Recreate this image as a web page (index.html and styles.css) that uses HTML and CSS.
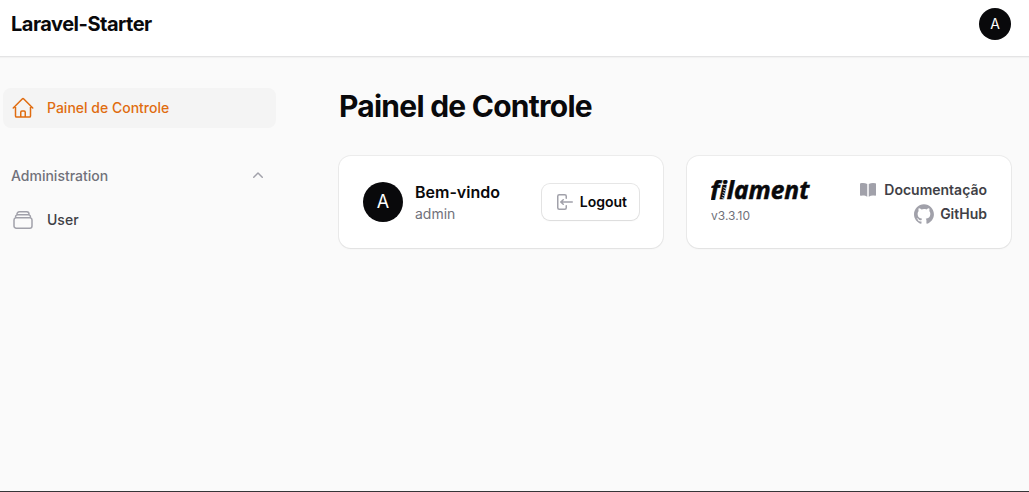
FILE: index.html
```html
<!DOCTYPE html>
<html lang="pt-BR">
<head>
<meta charset="utf-8">
<title>Painel de Controle - Laravel-Starter</title>
<link rel="stylesheet" href="styles.css">
</head>
<body>
<header class="topbar">
  <div class="brand">Laravel-Starter</div>
  <div class="avatar avatar-sm">A</div>
</header>
<div class="layout">
  <nav class="sidebar">
    <a class="nav-item active">
      <svg class="icon-lg" viewBox="0 0 24 24" fill="none" stroke="currentColor" stroke-width="1.5" stroke-linecap="round" stroke-linejoin="round"><path d="m2.25 12 8.954-8.955c.44-.439 1.152-.439 1.591 0L21.75 12M4.5 9.75v10.125c0 .621.504 1.125 1.125 1.125H9.75v-4.875c0-.621.504-1.125 1.125-1.125h2.25c.621 0 1.125.504 1.125 1.125V21h4.125c.621 0 1.125-.504 1.125-1.125V9.75M8.25 21h8.25"/></svg>
      <span>Painel de Controle</span>
    </a>
    <div class="group-head">
      <span>Administration</span>
      <svg class="icon-md" viewBox="0 0 20 20" fill="currentColor"><path d="M9.47 6.47a.75.75 0 0 1 1.06 0l4.25 4.25a.75.75 0 1 1-1.06 1.06L10 8.06l-3.72 3.72a.75.75 0 0 1-1.06-1.06l4.25-4.25Z"/></svg>
    </div>
    <a class="nav-item">
      <svg class="icon-lg" viewBox="0 0 24 24" fill="none" stroke="currentColor" stroke-width="1.5" stroke-linecap="round" stroke-linejoin="round"><path d="M6 6.878V6a2.25 2.25 0 0 1 2.25-2.25h7.5A2.25 2.25 0 0 1 18 6v.878m-12 0c.235-.083.487-.128.75-.128h10.5c.263 0 .515.045.75.128m-12 0A2.25 2.25 0 0 0 4.5 9v.878m13.5-3A2.25 2.25 0 0 1 19.5 9v.878m0 0a2.246 2.246 0 0 0-.75-.128H5.25c-.263 0-.515.045-.75.128m15 0A2.25 2.25 0 0 1 21 12v6a2.25 2.25 0 0 1-2.25 2.25H5.25A2.25 2.25 0 0 1 3 18v-6c0-.98.626-1.813 1.5-2.122"/></svg>
      <span>User</span>
    </a>
  </nav>
  <main class="main">
    <h1 class="title">Painel de Controle</h1>
    <div class="cards">
      <section class="card">
        <div class="avatar avatar-md">A</div>
        <div class="welcome">
          <h2 class="welcome-title">Bem-vindo</h2>
          <p class="welcome-name">admin</p>
        </div>
        <button class="logout">
          <svg class="icon-md" viewBox="0 0 20 20" fill="currentColor" fill-rule="evenodd"><path d="M3 4.25A2.25 2.25 0 0 1 5.25 2h5.5A2.25 2.25 0 0 1 13 4.25v2a.75.75 0 0 1-1.5 0v-2a.75.75 0 0 0-.75-.75h-5.5a.75.75 0 0 0-.75.75v11.5c0 .414.336.75.75.75h5.5a.75.75 0 0 0 .75-.75v-2a.75.75 0 0 1 1.5 0v2A2.25 2.25 0 0 1 10.75 18h-5.5A2.25 2.25 0 0 1 3 15.75V4.25Z"/><path d="M19 10a.75.75 0 0 0-.75-.75H8.704l1.048-.943a.75.75 0 1 0-1.004-1.114l-2.5 2.25a.75.75 0 0 0 0 1.114l2.5 2.25a.75.75 0 1 0 1.004-1.114l-1.048-.943h9.546A.75.75 0 0 0 19 10Z"/></svg>
          <span>Logout</span>
        </button>
      </section>
      <section class="card">
        <div class="product">
          <svg class="logo" viewBox="0 0 100 20">
            <text class="logo-text" x="-.8" y="19.3" textLength="99" lengthAdjust="spacingAndGlyphs">filament</text>
            <path class="logo-coil" d="M12.5 7.5l2.5 1M12.2 10l2.5 1M11.7 12.5l2.5 1M11.2 15l2.5 1M10.7 17.5l2.5 1"/>
          </svg>
          <p class="version">v3.3.10</p>
        </div>
        <div class="links">
          <a class="link">
            <svg class="icon-md" viewBox="0 0 20 20" fill="currentColor"><path d="M10.75 16.82A7.462 7.462 0 0 1 15 15.5c.71 0 1.396.098 2.046.282A.75.75 0 0 0 18 15.06v-11a.75.75 0 0 0-.546-.721A9.006 9.006 0 0 0 15 3a8.963 8.963 0 0 0-4.25 1.065V16.82ZM9.25 4.065A8.963 8.963 0 0 0 5 3c-.85 0-1.673.118-2.454.339A.75.75 0 0 0 2 4.06v11a.75.75 0 0 0 .954.721A7.506 7.506 0 0 1 5 15.5c1.579 0 3.042.487 4.25 1.32V4.065Z"/></svg>
            <span>Documentação</span>
          </a>
          <a class="link">
            <svg class="icon-md" viewBox="0 0 98 96" fill="currentColor"><path fill-rule="evenodd" clip-rule="evenodd" d="M48.854 0C21.839 0 0 22 0 49.217c0 21.756 13.993 40.172 33.405 46.69 2.427.49 3.316-1.059 3.316-2.362 0-1.141-.08-5.052-.08-9.127-13.59 2.934-16.42-5.867-16.42-5.867-2.184-5.704-5.42-7.17-5.42-7.17-4.448-3.015.324-3.015.324-3.015 4.934.326 7.523 5.052 7.523 5.052 4.367 7.496 11.404 5.378 14.235 4.074.404-3.178 1.699-5.378 3.074-6.6-10.839-1.141-22.243-5.378-22.243-24.283 0-5.378 1.94-9.778 5.014-13.2-.485-1.222-2.184-6.275.486-13.038 0 0 4.125-1.304 13.426 5.052a46.97 46.97 0 0 1 12.214-1.63c4.125 0 8.33.571 12.213 1.63 9.302-6.356 13.427-5.052 13.427-5.052 2.67 6.763.97 11.816.485 13.038 3.155 3.422 5.015 7.822 5.015 13.2 0 18.905-11.404 23.06-22.324 24.283 1.78 1.548 3.316 4.481 3.316 9.126 0 6.6-.08 11.897-.08 13.526 0 1.304.89 2.853 3.316 2.364 19.412-6.52 33.405-24.935 33.405-46.691C97.707 22 75.788 0 48.854 0z"/></svg>
            <span>GitHub</span>
          </a>
        </div>
      </section>
    </div>
  </main>
</div>
<footer class="bottom-edge"></footer>
</body>
</html>
```
FILE: styles.css
```css
* { box-sizing: border-box; }
body {
  margin: 0;
  height: 492px;
  display: flex;
  flex-direction: column;
  overflow: hidden;
  background: #fafafa;
  color: #09090b;
  font: 14px/20px Inter, sans-serif;
}
h1, h2, p { margin: 0; }
svg { display: block; flex: none; }
.topbar {
  display: flex;
  align-items: center;
  justify-content: space-between;
  height: 57px;
  padding: 0 18px 9px 11px;
  background: #fff;
  border-bottom: 1px solid #e4e4e5;
  box-shadow: 0 1px 1px rgba(0, 0, 0, .03);
}
.brand { font-size: 20px; font-weight: 700; letter-spacing: -.5px; }
.avatar {
  display: flex;
  align-items: center;
  justify-content: center;
  flex: none;
  border-radius: 50%;
  background: #09090b;
  color: #fff;
}
.avatar-sm { width: 32px; height: 32px; font-size: 14px; }
.avatar-md { width: 40px; height: 40px; font-size: 18px; }
.icon-lg { width: 24px; height: 24px; }
.icon-md { width: 20px; height: 20px; color: #a1a1aa; }
.layout { display: flex; flex: 1; }
.sidebar { width: 276px; padding: 31px 0 0 3px; }
.nav-item {
  display: flex;
  align-items: center;
  gap: 12px;
  height: 40px;
  padding: 0 8px;
  border-radius: 8px;
  color: #3f3f46;
  font-weight: 500;
}
.nav-item svg { color: #a1a1aa; }
.nav-item.active { background: #f4f4f4; }
.nav-item.active, .nav-item.active svg { color: #e06c10; }
.group-head {
  display: flex;
  align-items: center;
  justify-content: space-between;
  margin: 28px 0 4px;
  padding: 10px 8px;
  color: #71717a;
  font-weight: 500;
}
.main { flex: 1; padding: 31px 18px 0 63px; }
.title { font-size: 30px; line-height: 36px; font-weight: 700; letter-spacing: -.75px; }
.cards { display: grid; grid-template-columns: 1fr 1fr; gap: 24px; margin-top: 32px; }
.card {
  display: flex;
  align-items: center;
  height: 92px;
  padding: 0 24px;
  border-radius: 12px;
  background: #fff;
  box-shadow: 0 0 0 1px rgba(9, 9, 11, .06), 0 1px 2px rgba(0, 0, 0, .05);
}
.welcome { flex: 1; margin-left: 12px; }
.welcome-title { font-size: 16px; line-height: 24px; font-weight: 600; }
.welcome-name { color: #71717a; }
.logout {
  display: flex;
  align-items: center;
  gap: 6px;
  height: 36px;
  padding: 0 12px;
  border: 0;
  border-radius: 8px;
  background: #fff;
  color: #09090b;
  font: 600 14px/20px Inter, sans-serif;
  box-shadow: 0 0 0 1px rgba(9, 9, 11, .1), 0 1px 2px rgba(0, 0, 0, .05);
}
.product { flex: 1; }
.logo { width: 100px; height: 20px; overflow: hidden; }
.logo-text { font: italic 700 25px "Noto Sans", sans-serif; fill: #09090b; stroke: #09090b; stroke-width: .5; }
.logo-coil { stroke: #fff; stroke-width: .8; fill: none; }
.version { margin-top: 8px; font-size: 12px; line-height: 16px; color: #71717a; }
.links { display: flex; flex-direction: column; align-items: flex-end; gap: 4px; }
.link { display: flex; align-items: center; gap: 6px; color: #3f3f46; font-weight: 600; }
.bottom-edge { height: 1px; background: #353538; }
```
